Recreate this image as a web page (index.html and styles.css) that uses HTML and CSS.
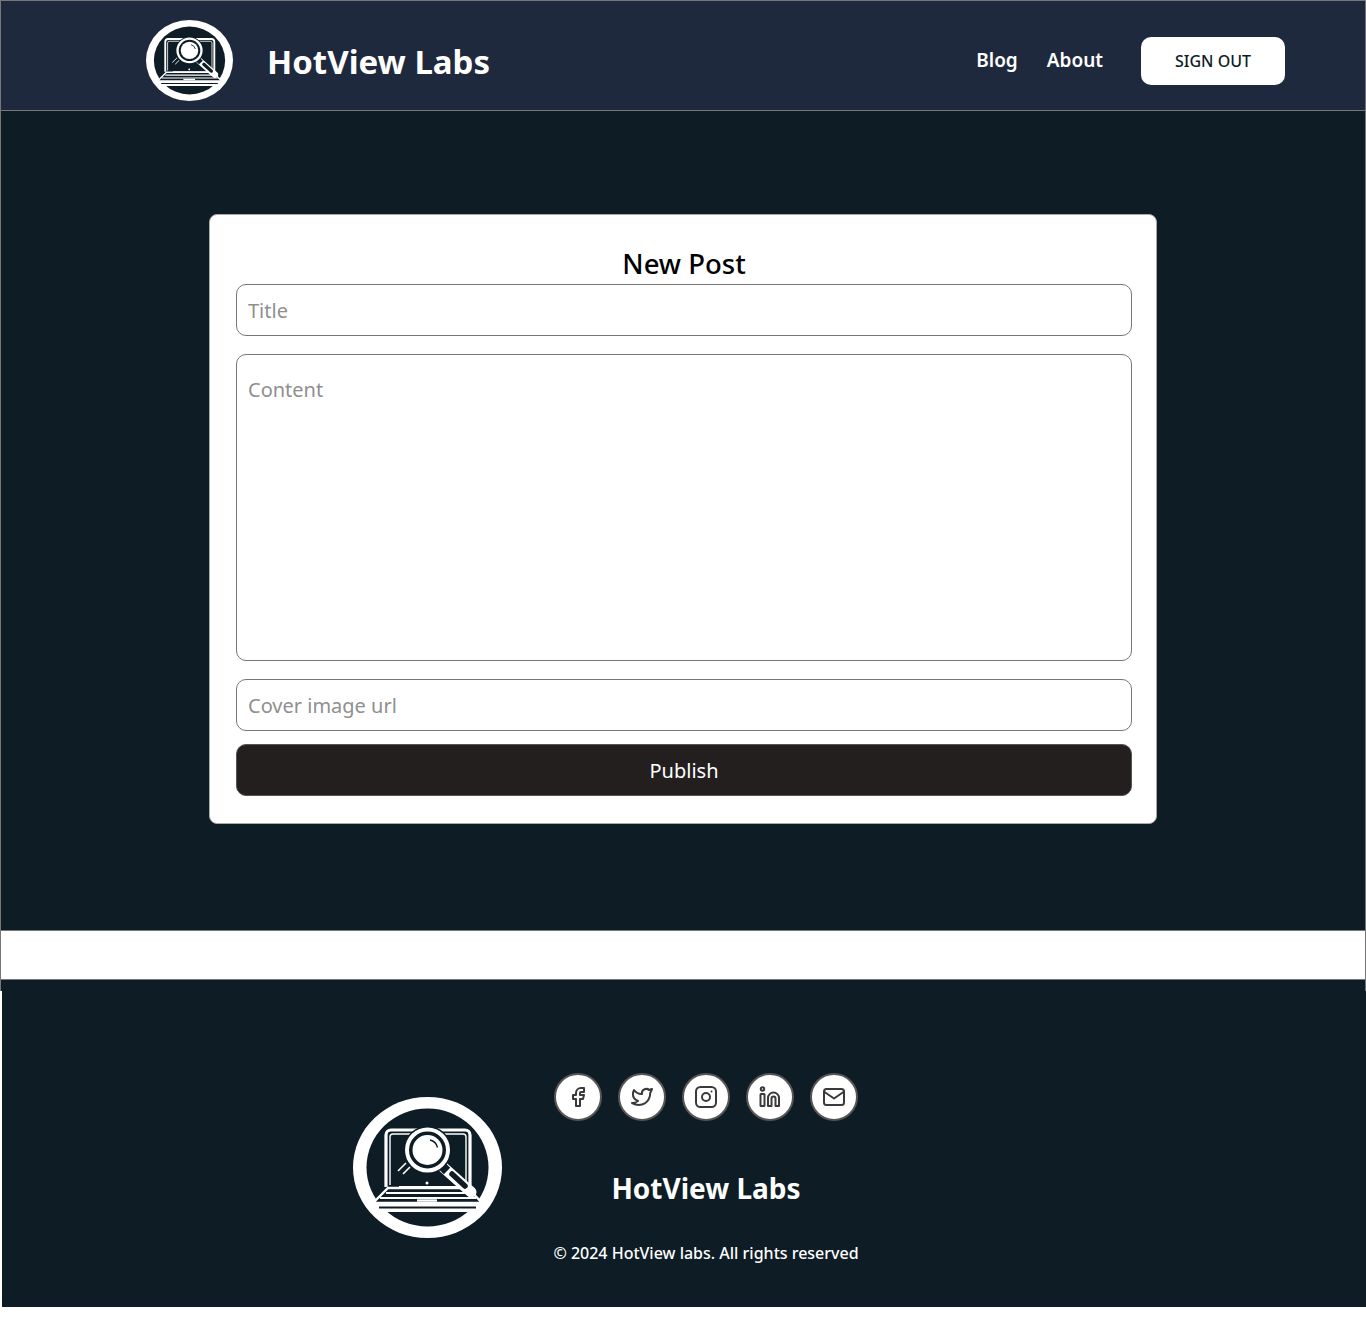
FILE: index.html
```html
<!DOCTYPE html>
<html>
<head>
  <title>HotView Labs - New Post</title>
  <link rel="stylesheet" href="styles.css">
</head>
<body>
  <svg class="sprite" width="0" height="0">
    <symbol id="logo" viewBox="0 0 149 141" preserveAspectRatio="none">
      <ellipse cx="74.5" cy="70.5" rx="74.5" ry="70.5" fill="#fff"/>
      <ellipse cx="74.5" cy="70.5" rx="61" ry="59" fill="#0d1c25"/>
      <path d="M33 90V38a5 5 0 0 1 5-5h74a5 5 0 0 1 5 5v52" fill="none" stroke="#fff" stroke-width="3.2"/>
      <path d="M37 88V40a3 3 0 0 1 3-3h70a3 3 0 0 1 3 3v48" fill="none" stroke="#fff" stroke-width="1.4"/>
      <path d="M45 74l8-8M50 77l7-7" stroke="#fff" stroke-width="1.6"/>
      <path d="M46 90h66" stroke="#fff" stroke-width="2"/>
      <circle cx="74" cy="86" r="1.5" fill="#fff"/>
      <path d="M20 106l15-15h80l14 15z" fill="#0d1c25" stroke="#fff" stroke-width="2.4"/>
      <path d="M33 96h84M27 101h96" stroke="#fff" stroke-width="2"/>
      <path d="M64 103.5h20" stroke="#fff" stroke-width="2.4"/>
      <rect x="20" y="106" width="109" height="9" rx="2" fill="#fff"/>
      <path d="M26 110.5h97" stroke="#0d1c25" stroke-width="1.8"/>
      <path d="M90 70l28 25" stroke="#fff" stroke-width="11" stroke-linecap="round"/>
      <path d="M88 68l6 6" stroke="#0d1c25" stroke-width="9"/>
      <path d="M99 77l13 12" stroke="#0d1c25" stroke-width="5.5" stroke-linecap="round"/>
      <circle cx="74.5" cy="53" r="24" fill="#0d1c25"/>
      <circle cx="74.5" cy="53" r="20.5" fill="none" stroke="#fff" stroke-width="4"/>
      <circle cx="74.5" cy="53" r="15" fill="#fff"/>
      <path d="M77 43a10 10 0 0 1 7.5 7.5" fill="none" stroke="#0d1c25" stroke-width="1.4"/>
    </symbol>
  </svg>

  <header class="site-header">
    <a class="brand" href="#">
      <svg class="brand-logo"><use href="#logo"/></svg>
      <span class="brand-name">HotView Labs</span>
    </a>
    <nav class="main-nav">
      <a href="#">Blog</a>
      <a href="#">About</a>
      <button type="button" class="btn-signout">SIGN OUT</button>
    </nav>
  </header>

  <main class="page-main">
    <form class="post-card">
      <h2>New Post</h2>
      <input type="text" class="field field-title" placeholder="Title">
      <textarea class="field field-content" placeholder="Content"></textarea>
      <input type="text" class="field field-cover" placeholder="Cover image url">
      <button type="submit" class="btn-publish">Publish</button>
    </form>
  </main>

  <div class="spacer-band"></div>

  <footer class="site-footer">
    <svg class="footer-logo"><use href="#logo"/></svg>
    <div class="footer-info">
      <div class="social-row">
        <a class="social" href="#">
          <svg viewBox="0 0 24 24"><path d="M7 10v4h3v7h4v-7h3l1-4h-4V8a1 1 0 0 1 1-1h3V3h-3a5 5 0 0 0-5 5v2H7"/></svg>
        </a>
        <a class="social" href="#">
          <svg viewBox="0 0 24 24"><path d="M22 4.01c-1 .49-1.98.689-3 .99-1.121-1.265-2.783-1.335-4.38-.737S11.977 6.323 12 8v1c-3.245.083-6.135-1.395-8-4 0 0-4.182 7.433 4 11-1.872 1.247-3.739 2.088-6 2 3.308 1.803 6.913 2.423 10.034 1.517 3.58-1.04 6.522-3.723 7.651-7.742a13.84 13.84 0 0 0 .497-3.753c0-.249 1.51-2.772 1.818-4.013z"/></svg>
        </a>
        <a class="social" href="#">
          <svg viewBox="0 0 24 24"><rect x="2" y="2" width="20" height="20" rx="4.5"/><circle cx="12" cy="12" r="4"/><path d="M17.5 6.5v.01"/></svg>
        </a>
        <a class="social" href="#">
          <svg viewBox="0 0 24 24"><circle cx="4.5" cy="4" r="1.7"/><rect x="2.5" y="9" width="4" height="12" rx=".5"/><path d="M10 21v-8a5.5 5.5 0 0 1 11 0v8h-3.5v-7.5a2 2 0 0 0-4 0V21z"/></svg>
        </a>
        <a class="social" href="#">
          <svg viewBox="0 0 24 24"><rect x="2" y="4" width="20" height="16" rx="2.5"/><path d="M2.5 7l9.5 6.5L21.5 7"/></svg>
        </a>
      </div>
      <h3 class="footer-name">HotView Labs</h3>
      <p class="copyright">© 2024 HotView labs. All rights reserved</p>
    </div>
  </footer>
</body>
</html>
```

FILE: styles.css
```css
* {
  box-sizing: border-box;
}

body {
  margin: 0;
  background-color: #fff;
  font-family: "Noto Sans", sans-serif;
}

.sprite {
  position: absolute;
}

.site-header {
  display: flex;
  align-items: center;
  justify-content: space-between;
  height: 111px;
  padding: 10px 80px 0 145px;
  background-color: #1f293d;
  border: 1px solid #777;
}

.brand {
  display: flex;
  align-items: center;
  gap: 34px;
  color: #fff;
  text-decoration: none;
}

.brand-logo {
  width: 87px;
  height: 81px;
}

.brand-name {
  padding-top: 2px;
  font-size: 33px;
  font-weight: 700;
}

.main-nav {
  display: flex;
  align-items: center;
  gap: 29px;
}

.main-nav a {
  margin-bottom: 2px;
  color: #fff;
  font-size: 19px;
  font-weight: 600;
  text-decoration: none;
}

.btn-signout {
  width: 144px;
  height: 48px;
  margin-left: 9px;
  background-color: #fff;
  color: #0d1c25;
  border: none;
  border-radius: 10px;
  font-family: inherit;
  font-size: 16px;
  font-weight: 500;
}

.page-main {
  display: flex;
  justify-content: center;
  height: 819px;
  padding-top: 103px;
  background-color: #0d1c25;
  border-left: 1px solid #777;
  border-right: 1px solid #777;
}

.post-card {
  display: flex;
  flex-direction: column;
  align-items: center;
  width: 948px;
  height: 610px;
  padding: 33px 24px 0 26px;
  background-color: #fff;
  border: 1px solid #aaa;
  border-radius: 8px;
}

.post-card h2 {
  margin: -2px 0 2px;
  color: #000;
  font-size: 27.5px;
  font-weight: 500;
  line-height: 36px;
}

.field {
  display: block;
  width: 100%;
  height: 52px;
  padding: 0 11px;
  border: 1px solid #777;
  border-radius: 10px;
  background-color: #fff;
  font-family: inherit;
  font-size: 20px;
  color: #222;
}

.field::placeholder {
  color: #8f8f8f;
}

.field-content {
  height: 307px;
  margin-top: 18px;
  padding-top: 21px;
  resize: none;
}

.field-cover {
  margin-top: 18px;
}

.btn-publish {
  width: 100%;
  height: 52px;
  margin-top: 13px;
  background-color: #231f1f;
  color: #fff;
  border: 1px solid #555;
  border-radius: 10px;
  font-family: inherit;
  font-size: 20px;
}

.spacer-band {
  height: 50px;
  border: 1px solid #777;
}

.site-footer {
  position: relative;
  display: flex;
  align-items: center;
  gap: 52px;
  height: 327px;
  margin-left: 2px;
  padding: 48px 0 0 351px;
  background-color: #0d1c25;
}

/* stray strips at the footer's top corners */
.site-footer::before {
  content: "";
  position: absolute;
  top: 0;
  left: -2px;
  width: 2px;
  height: 11px;
  background-color: #0d1c25;
  border-left: 1px solid #777;
}

.site-footer::after {
  content: "";
  position: absolute;
  top: 0;
  right: 0;
  width: 1px;
  height: 11px;
  background-color: #777;
}

.footer-logo {
  width: 149px;
  height: 141px;
}

.footer-info {
  display: flex;
  flex-direction: column;
  align-items: center;
  width: 304px;
  margin-top: 2px;
}

.social-row {
  display: flex;
  gap: 16px;
}

.social {
  display: flex;
  align-items: center;
  justify-content: center;
  width: 48px;
  height: 48px;
  background-color: #fff;
  border: 2px solid #555;
  border-radius: 50%;
}

.social svg {
  width: 24px;
  height: 24px;
  fill: none;
  stroke: #3a3a3a;
  stroke-width: 2;
  stroke-linecap: round;
  stroke-linejoin: round;
}

.footer-name {
  margin: 46px 0 0;
  color: #fff;
  font-size: 28px;
  font-weight: 700;
  line-height: 42px;
}

.copyright {
  margin: 33px 0 0;
  color: #fff;
  font-size: 16px;
  font-weight: 500;
  line-height: 22px;
  white-space: nowrap;
}
```
